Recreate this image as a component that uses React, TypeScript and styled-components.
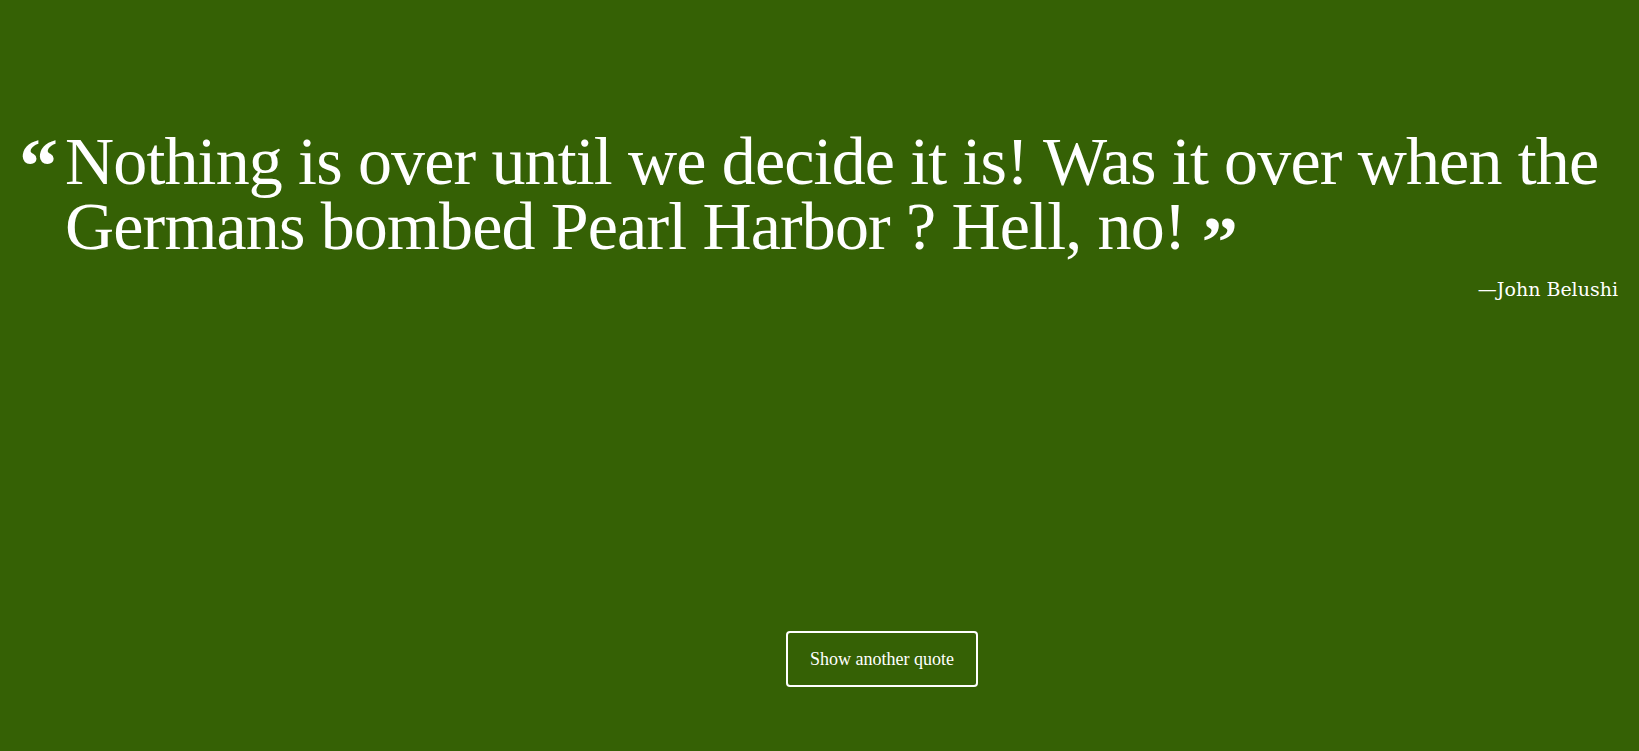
import styled, { createGlobalStyle } from 'styled-components'

const GlobalStyle = createGlobalStyle`
  html, body {
    margin: 0;
    padding: 0;
    background-color: #356105;
  }

  body {
    font-family: "Liberation Serif", "Times New Roman", serif;
    color: #ffffff;
  }
`

const Page = styled.main`
  box-sizing: border-box;
  min-height: 100vh;
  display: flex;
  flex-direction: column;
  padding: 129px 21px 0 19px;
`

const QuoteRow = styled.blockquote`
  display: flex;
  flex-direction: row;
  align-items: flex-start;
  margin: 0;
`

const OpenMark = styled.span`
  flex: 0 0 46px;
  font-size: 78px;
  font-weight: 700;
  line-height: 65px;
  margin-top: 4px;
`

const QuoteText = styled.p`
  flex: 1;
  margin: 0;
  font-size: 68px;
  line-height: 65px;
  letter-spacing: -0.85px;
`

const CloseMark = styled.span`
  font-size: 72px;
  font-weight: 700;
  line-height: 0;
  vertical-align: -17px;
`

const Author = styled.cite`
  display: block;
  margin-top: 18px;
  text-align: right;
  font-family: "DejaVu Serif", serif;
  font-style: normal;
  font-size: 19px;
  line-height: 24px;
`

const ButtonRow = styled.div`
  display: flex;
  justify-content: center;
  padding-left: 127px;
  margin-top: 330px;
`

const QuoteButton = styled.button`
  box-sizing: border-box;
  height: 56px;
  padding: 0 22px;
  background: transparent;
  color: #ffffff;
  border: 2px solid #ffffff;
  border-radius: 4px;
  font-family: "Liberation Serif", serif;
  font-size: 18px;
  cursor: pointer;
`

function App() {
  return (
    <>
      <GlobalStyle />
      <Page>
        <QuoteRow>
          <OpenMark>“</OpenMark>
          <QuoteText>
            Nothing is over until we decide it is! Was it over when the
            Germans bombed Pearl Harbor ? Hell, no! <CloseMark>”</CloseMark>
          </QuoteText>
        </QuoteRow>
        <Author>—John Belushi</Author>
        <ButtonRow>
          <QuoteButton type="button">Show another quote</QuoteButton>
        </ButtonRow>
      </Page>
    </>
  )
}

export default App
